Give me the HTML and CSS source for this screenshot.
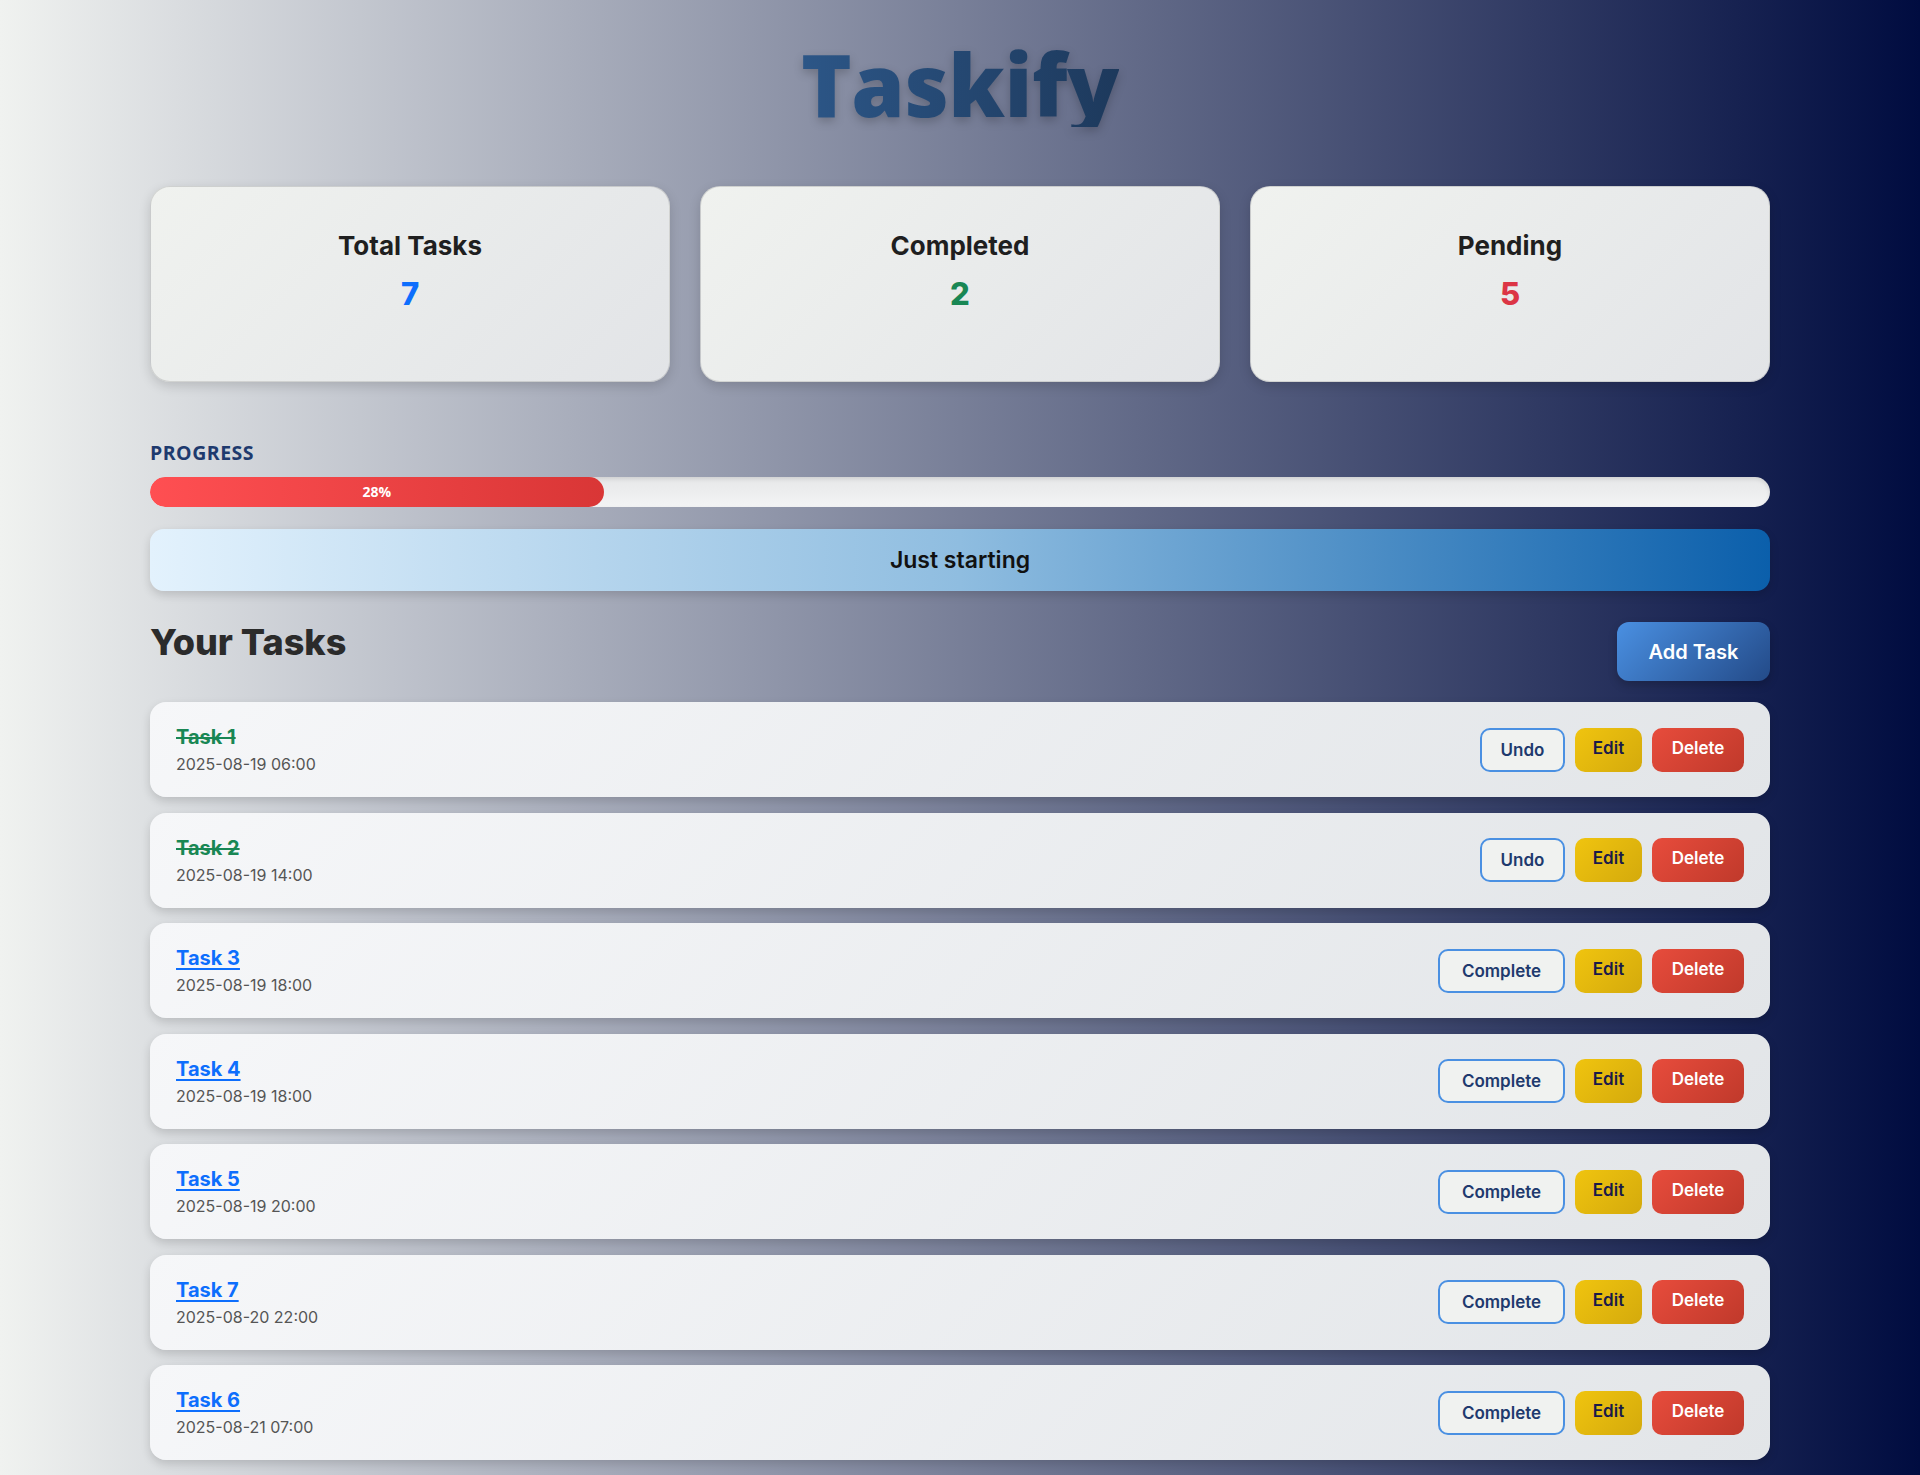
FILE: index.html
```html
<!DOCTYPE html>
<html lang="en">
<head>
<meta charset="UTF-8">
<title>Taskify</title>
<link rel="stylesheet" href="styles.css">
</head>
<body>
<div class="container">
  <h1 class="brand">Taskify</h1>

  <section class="stats">
    <div class="stat-card">
      <h3 class="stat-title">Total Tasks</h3>
      <p class="stat-value stat-total">7</p>
    </div>
    <div class="stat-card">
      <h3 class="stat-title">Completed</h3>
      <p class="stat-value stat-done">2</p>
    </div>
    <div class="stat-card">
      <h3 class="stat-title">Pending</h3>
      <p class="stat-value stat-pending">5</p>
    </div>
  </section>

  <section class="progress-section">
    <div class="progress-label">PROGRESS</div>
    <div class="progress-track">
      <div class="progress-fill" style="width: 28%">28%</div>
    </div>
    <div class="progress-message">Just starting</div>
  </section>

  <section class="tasks">
    <div class="tasks-header">
      <h2 class="tasks-title">Your Tasks</h2>
      <button class="btn-add">Add Task</button>
    </div>

    <ul class="task-list">
      <li class="task-card">
        <div class="task-info">
          <a class="task-name done">Task 1</a>
          <span class="task-date">2025-08-19 06:00</span>
        </div>
        <div class="task-actions">
          <button class="btn btn-outline btn-undo">Undo</button>
          <button class="btn btn-edit">Edit</button>
          <button class="btn btn-delete">Delete</button>
        </div>
      </li>
      <li class="task-card">
        <div class="task-info">
          <a class="task-name done">Task 2</a>
          <span class="task-date">2025-08-19 14:00</span>
        </div>
        <div class="task-actions">
          <button class="btn btn-outline btn-undo">Undo</button>
          <button class="btn btn-edit">Edit</button>
          <button class="btn btn-delete">Delete</button>
        </div>
      </li>
      <li class="task-card">
        <div class="task-info">
          <a class="task-name">Task 3</a>
          <span class="task-date">2025-08-19 18:00</span>
        </div>
        <div class="task-actions">
          <button class="btn btn-outline btn-complete">Complete</button>
          <button class="btn btn-edit">Edit</button>
          <button class="btn btn-delete">Delete</button>
        </div>
      </li>
      <li class="task-card">
        <div class="task-info">
          <a class="task-name">Task 4</a>
          <span class="task-date">2025-08-19 18:00</span>
        </div>
        <div class="task-actions">
          <button class="btn btn-outline btn-complete">Complete</button>
          <button class="btn btn-edit">Edit</button>
          <button class="btn btn-delete">Delete</button>
        </div>
      </li>
      <li class="task-card">
        <div class="task-info">
          <a class="task-name">Task 5</a>
          <span class="task-date">2025-08-19 20:00</span>
        </div>
        <div class="task-actions">
          <button class="btn btn-outline btn-complete">Complete</button>
          <button class="btn btn-edit">Edit</button>
          <button class="btn btn-delete">Delete</button>
        </div>
      </li>
      <li class="task-card">
        <div class="task-info">
          <a class="task-name">Task 7</a>
          <span class="task-date">2025-08-20 22:00</span>
        </div>
        <div class="task-actions">
          <button class="btn btn-outline btn-complete">Complete</button>
          <button class="btn btn-edit">Edit</button>
          <button class="btn btn-delete">Delete</button>
        </div>
      </li>
      <li class="task-card">
        <div class="task-info">
          <a class="task-name">Task 6</a>
          <span class="task-date">2025-08-21 07:00</span>
        </div>
        <div class="task-actions">
          <button class="btn btn-outline btn-complete">Complete</button>
          <button class="btn btn-edit">Edit</button>
          <button class="btn btn-delete">Delete</button>
        </div>
      </li>
    </ul>
  </section>
</div>
</body>
</html>
```

FILE: styles.css
```css
* {
  box-sizing: border-box;
}

html, body {
  margin: 0;
  padding: 0;
}

body {
  min-height: 100vh;
  background: linear-gradient(to right, #f0f2f0 0%, #000c40 100%);
  font-family: Inter, "Noto Sans", "DejaVu Sans", sans-serif;
  color: #222;
}

.container {
  width: 1620px;
  margin: 0 auto;
  padding: 41px 0 40px;
}

.brand {
  width: fit-content;
  margin: 0 auto;
  font-family: "Open Sans", "Noto Sans", sans-serif;
  font-weight: 800;
  font-size: 86px;
  line-height: 1;
  letter-spacing: -0.5px;
  color: transparent;
  background: linear-gradient(90deg, #2c5687 0%, #1d395c 100%);
  -webkit-background-clip: text;
  background-clip: text;
  filter: drop-shadow(0 4px 5px rgba(0, 0, 0, 0.2));
}

/* Stats */
.stats {
  display: grid;
  grid-template-columns: repeat(3, 1fr);
  gap: 30px;
  margin-top: 59px;
}

.stat-card {
  height: 196px;
  padding-top: 43px;
  text-align: center;
  background: linear-gradient(135deg, #f0f2ef 0%, #e2e4e7 100%);
  border: 1px solid rgba(0, 0, 0, 0.12);
  border-radius: 20px;
  box-shadow: 0 4px 12px rgba(0, 0, 0, 0.15);
}

.stat-title {
  margin: 0;
  font-size: 26px;
  line-height: 31px;
  font-weight: 700;
  color: #1f1f1f;
}

.stat-value {
  margin: 14px 0 0;
  font-size: 31px;
  line-height: 38px;
  font-weight: 800;
}

.stat-total { color: #0d6efd; }
.stat-done { color: #198754; }
.stat-pending { color: #dc3545; }

/* Progress */
.progress-section {
  margin-top: 59px;
}

.progress-label {
  font-family: "Open Sans", "Noto Sans", sans-serif;
  font-weight: 700;
  font-size: 19.5px;
  line-height: 23px;
  letter-spacing: 0.5px;
  color: #1e3a6e;
}

.progress-track {
  margin-top: 13px;
  height: 30px;
  border-radius: 15px;
  background: linear-gradient(to bottom, #e6e7e8, #f3f4f5);
  box-shadow: inset 0 2px 4px rgba(0, 0, 0, 0.1);
  overflow: hidden;
}

.progress-fill {
  height: 100%;
  border-radius: 15px;
  background: linear-gradient(to right, #ff4f52, #d93636);
  color: #fff;
  font-family: "Open Sans", "Noto Sans", sans-serif;
  font-weight: 700;
  font-size: 14px;
  line-height: 30px;
  text-align: center;
}

.progress-message {
  margin-top: 22px;
  height: 62px;
  display: flex;
  align-items: center;
  justify-content: center;
  border-radius: 14px;
  background: linear-gradient(to right, #e3f2fd 0%, #8fbde0 50%, #0b5fab 100%);
  box-shadow: 0 4px 10px rgba(0, 0, 0, 0.15);
  font-size: 23px;
  font-weight: 600;
  color: #111;
}

/* Tasks */
.tasks {
  margin-top: 30px;
}

.tasks-header {
  display: flex;
  justify-content: space-between;
  align-items: flex-start;
}

.tasks-title {
  margin: 0;
  font-size: 36px;
  line-height: 43px;
  font-weight: 800;
  color: #2b2b2b;
}

.btn-add {
  margin-top: 1px;
  width: 153px;
  height: 59px;
  border: none;
  border-radius: 12px;
  background: linear-gradient(135deg, #4a90e2 0%, #234a88 100%);
  box-shadow: 0 4px 10px rgba(0, 0, 0, 0.2);
  color: #fff;
  font-family: inherit;
  font-size: 20px;
  font-weight: 600;
  cursor: pointer;
}

.task-list {
  list-style: none;
  margin: 21px 0 0;
  padding: 0;
  display: flex;
  flex-direction: column;
  gap: 15.5px;
}

.task-card {
  height: 95px;
  padding: 0 26px;
  display: flex;
  align-items: center;
  justify-content: space-between;
  background: linear-gradient(135deg, #f6f7f9 0%, #e2e5e8 100%);
  border-radius: 16px;
  box-shadow: 0 4px 10px rgba(0, 0, 0, 0.15);
}

.task-info {
  display: flex;
  flex-direction: column;
  padding-top: 3px;
}

.task-name {
  font-size: 20px;
  line-height: 27px;
  font-weight: 700;
  color: #0d6efd;
  text-decoration: underline;
  text-decoration-thickness: 2px;
  text-underline-offset: 3px;
  cursor: pointer;
}

.task-name.done {
  color: #198754;
  text-decoration: line-through;
  text-decoration-thickness: 2px;
}

.task-date {
  font-size: 16px;
  line-height: 27px;
  color: #555;
}

.task-actions {
  display: flex;
  gap: 10px;
}

.btn {
  height: 44px;
  border: none;
  border-radius: 10px;
  font-family: inherit;
  font-size: 17px;
  font-weight: 600;
  cursor: pointer;
  padding: 0;
}

.btn-outline {
  background: #f0f2f0;
  border: 2px solid #4a90e2;
  color: #1e3a6e;
}

.btn-undo { width: 85px; }
.btn-complete { width: 127px; }

.btn-edit {
  width: 67px;
  padding-bottom: 4px;
  background: linear-gradient(135deg, #f0c40f 0%, #d4aa0c 100%);
  color: #1a1a4a;
}

.btn-delete {
  width: 92px;
  padding-bottom: 4px;
  background: linear-gradient(135deg, #e74c3c 0%, #c0392b 100%);
  color: #fff;
}
```
